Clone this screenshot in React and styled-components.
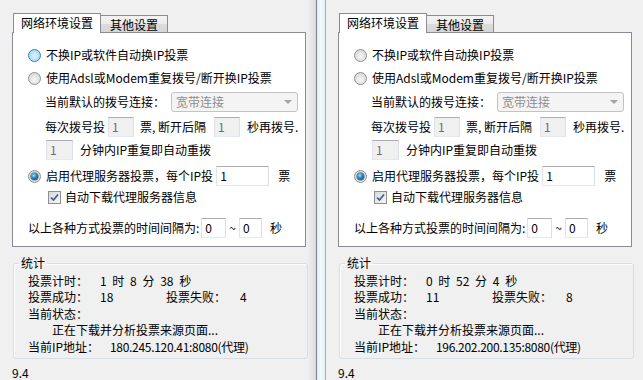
import React from 'react';
import styled, { createGlobalStyle } from 'styled-components';

const GlobalStyle = createGlobalStyle`
  html, body {
    margin: 0;
    padding: 0;
    background: #f0f0f0;
  }
  body {
    font-family: "Noto Sans CJK SC", "Liberation Sans", sans-serif;
    font-size: 12px;
    color: #000;
  }
`;

const sessions = [
  {
    id: 'left',
    firstRadio: 'hover',
    width: 316,
    shade: true,
    timer: ['1', '8', '38'],
    ok: 18,
    fail: 4,
    ip: '180.245.120.41:8080',
  },
  {
    id: 'right',
    firstRadio: 'off',
    width: 317,
    shade: false,
    timer: ['0', '52', '4'],
    ok: 11,
    fail: 8,
    ip: '196.202.200.135:8080',
  },
];

function Radio({ state = 'off' }) {
  return <RadioMark $state={state} />;
}

function Check() {
  return (
    <CheckMark>
      <svg width="11" height="11" viewBox="0 0 11 11">
        <path d="M2 5.5 L4.5 8 L9 2.5" fill="none" stroke="#3d5f96" strokeWidth="1.7" />
      </svg>
    </CheckMark>
  );
}

function VotePanel({ data }) {
  return (
    <Panel $w={data.width} $shade={data.shade}>
      <Tabs>
        <Tab $active>网络环境设置</Tab>
        <Tab>其他设置</Tab>
      </Tabs>
      <Frame>
        <Row $indent={15}>
          <Radio state={data.firstRadio} />
          <Text $ml={5}>不换IP或软件自动换IP投票</Text>
        </Row>
        <Row $indent={15} $mt={3}>
          <Radio />
          <Text $ml={5}>使用Adsl或Modem重复拨号/断开换IP投票</Text>
        </Row>
        <Row $indent={32} $mt={4}>
          <Text>当前默认的拨号连接：</Text>
          <Select>
            <span>宽带连接</span>
            <Arrow />
          </Select>
        </Row>
        <Row $indent={32} $mt={5}>
          <Text>每次拨号投</Text>
          <TextBox $w={26} $ml={3} $disabled>1</TextBox>
          <Text $ml={6}>票, 断开后隔</Text>
          <TextBox $w={26} $ml={8} $disabled>1</TextBox>
          <Text $ml={7}>秒再拨号.</Text>
        </Row>
        <Row $indent={33} $mt={3}>
          <TextBox $w={27} $disabled>1</TextBox>
          <Text $ml={7}>分钟内IP重复即自动重拨</Text>
        </Row>
        <Row $indent={15} $mt={6}>
          <Radio state="on" />
          <Text $ml={5}>启用代理服务器投票，每个IP投</Text>
          <TextBox $w={53} $ml={3}>1</TextBox>
          <Text $ml={9}>票</Text>
        </Row>
        <Row $indent={35} $mt={1}>
          <Check />
          <Text $ml={4}>自动下载代理服务器信息</Text>
        </Row>
        <Row $indent={15} $mt={11}>
          <Text>以上各种方式投票的时间间隔为:</Text>
          <TextBox $w={25} $ml={2}>0</TextBox>
          <Text $ml={3}>~</Text>
          <TextBox $w={23} $ml={3}>0</TextBox>
          <Text $ml={8}>秒</Text>
        </Row>
      </Frame>

      <Stats>
        <Legend>统计</Legend>
        <StatsBody>
          <StatRow>
            <Label $w={72}>投票计时：</Label>
            <Value>
              {data.timer[0]} 时 {data.timer[1]} 分 {data.timer[2]} 秒
            </Value>
          </StatRow>
          <StatRow>
            <Label $w={72}>投票成功：</Label>
            <Value $w={66}>{data.ok}</Value>
            <Label $w={74}>投票失败：</Label>
            <Value>{data.fail}</Value>
          </StatRow>
          <StatRow>
            <Label>当前状态：</Label>
          </StatRow>
          <StatRow $indent={24}>
            <Text>正在下载并分析投票来源页面...</Text>
          </StatRow>
          <StatRow>
            <Label $w={82}>当前IP地址：</Label>
            <Value $tight>{data.ip}(代理)</Value>
          </StatRow>
        </StatsBody>
      </Stats>
      <Version>9.4</Version>
    </Panel>
  );
}

export default function App() {
  return (
    <>
      <GlobalStyle />
      <Screen>
        <VotePanel data={sessions[0]} />
        <Divider />
        <VotePanel data={sessions[1]} />
      </Screen>
    </>
  );
}

const Screen = styled.div`
  display: flex;
  width: 643px;
  height: 380px;
  overflow: hidden;
  background: #f0f0f0;
`;

const Panel = styled.div`
  flex: 0 0 ${({ $w }) => $w}px;
  box-sizing: border-box;
  padding: 13px 0 0 12px;
  display: flex;
  flex-direction: column;
  background: ${({ $shade }) =>
    $shade
      ? 'linear-gradient(to right, #f0f0f0 calc(100% - 9px), #e4e4e4 calc(100% - 3px), #d8d8d8)'
      : '#f0f0f0'};
`;

const Divider = styled.div`
  flex: 0 0 10px;
  box-sizing: border-box;
  border-left: 1px solid #7d878c;
  border-right: 1px solid #a7b1b6;
  background: linear-gradient(to right, #d6ecf3, #f2fafd 45%, #dff0f6);
`;

const Tabs = styled.div`
  display: flex;
  align-items: flex-end;
  height: 19px;
  margin-left: 1px;
  position: relative;
  z-index: 1;
`;

const Tab = styled.div`
  box-sizing: border-box;
  height: ${({ $active }) => ($active ? 20 : 17)}px;
  margin-bottom: ${({ $active }) => ($active ? -1 : 0)}px;
  padding: 0 ${({ $active }) => ($active ? 7 : 9)}px;
  border: 1px solid #898c95;
  border-bottom: none;
  ${({ $active }) => (!$active ? 'border-left: none;' : '')}
  background: ${({ $active }) =>
    $active ? '#fff' : 'linear-gradient(#f3f3f3, #ebebeb 50%, #dcdcdc 51%, #d6d6d6)'};
  line-height: ${({ $active }) => ($active ? 18 : 17)}px;
  font-size: 12px;
  white-space: nowrap;
`;

const Frame = styled.div`
  width: 294px;
  height: 218px;
  box-sizing: border-box;
  border: 1px solid #898c95;
  background: #fff;
  padding-top: 12px;
  display: flex;
  flex-direction: column;
`;

const Row = styled.div`
  display: flex;
  align-items: center;
  height: 20px;
  margin-top: ${({ $mt = 0 }) => $mt}px;
  padding-left: ${({ $indent = 0 }) => $indent}px;
  white-space: nowrap;
`;

const Text = styled.span`
  margin-left: ${({ $ml = 0 }) => $ml}px;
  line-height: 16px;
  white-space: pre;
`;

const RadioMark = styled.span`
  position: relative;
  flex: 0 0 13px;
  height: 13px;
  box-sizing: border-box;
  border-radius: 50%;
  border: 1px solid ${({ $state }) => ($state === 'hover' ? '#3c7fb1' : '#8e8f8f')};
  background: ${({ $state }) =>
    $state === 'hover'
      ? 'radial-gradient(circle at 50% 55%, #def2fc 0, #b9e2f8 50%, #8ccbef 100%)'
      : 'radial-gradient(circle at 50% 60%, #f6f6f6 0, #e3e3e3 50%, #cfcfcf 100%)'};

  &::after {
    content: '';
    display: ${({ $state }) => ($state === 'on' ? 'block' : 'none')};
    position: absolute;
    left: 2px;
    top: 2px;
    width: 7px;
    height: 7px;
    border-radius: 50%;
    background: radial-gradient(circle at 40% 35%, #a6e0fb 0, #3a93cf 35%, #0d4b7c 80%);
    box-shadow: 0 0 0 0.5px #1b4e77;
  }
`;

const CheckMark = styled.span`
  flex: 0 0 13px;
  height: 13px;
  box-sizing: border-box;
  border: 1px solid #8e8f8f;
  background: linear-gradient(135deg, #d9d9d9, #f7f7f7);
  display: flex;
  align-items: center;
  justify-content: center;
`;

const Select = styled.div`
  width: 127px;
  height: 20px;
  box-sizing: border-box;
  margin-left: 6px;
  padding: 0 5px 0 4px;
  border: 1px solid #c3c3c3;
  border-radius: 3px;
  background: #f4f4f4;
  color: #8d8d8d;
  display: flex;
  align-items: center;
  justify-content: space-between;
  line-height: 16px;
`;

const Arrow = styled.span`
  width: 0;
  height: 0;
  border-left: 4px solid transparent;
  border-right: 4px solid transparent;
  border-top: 4px solid #a3a3a3;
`;

const TextBox = styled.span`
  width: ${({ $w }) => $w}px;
  height: 20px;
  box-sizing: border-box;
  margin-left: ${({ $ml = 0 }) => $ml}px;
  padding: 1px 3px;
  border: 1px solid;
  border-color: #abadb3 #dbdfe6 #e3e9ef #e2e3ea;
  background: ${({ $disabled }) => ($disabled ? '#f0f0f0' : '#fff')};
  color: ${({ $disabled }) => ($disabled ? '#6d6d6d' : '#000')};
  line-height: 15px;
  font-size: 12px;
`;

const Stats = styled.fieldset`
  width: 295px;
  height: 105px;
  box-sizing: border-box;
  margin: 8px 0 0 1px;
  padding: 0;
  border: 1px solid #d5dfe5;
  border-radius: 3px;
  box-shadow: inset 1px 1px 0 #fff;
  min-width: 0;
`;

const Legend = styled.legend`
  margin-left: 5px;
  padding: 0 2px;
  line-height: 16px;
`;

const StatsBody = styled.div`
  padding: 1px 0 0 14px;
  display: flex;
  flex-direction: column;
`;

const StatRow = styled.div`
  display: flex;
  align-items: center;
  height: 16.5px;
  padding-left: ${({ $indent = 0 }) => $indent}px;
  white-space: nowrap;
`;

const Label = styled.span`
  width: ${({ $w }) => ($w ? `${$w}px` : 'auto')};
  flex-shrink: 0;
  line-height: 16px;
`;

const Value = styled.span`
  width: ${({ $w }) => ($w ? `${$w}px` : 'auto')};
  flex-shrink: 0;
  line-height: 16px;
  word-spacing: 3px;
  letter-spacing: ${({ $tight }) => ($tight ? '-0.3px' : 'normal')};
`;

const Version = styled.div`
  margin-top: 7px;
  line-height: 14px;
`;
